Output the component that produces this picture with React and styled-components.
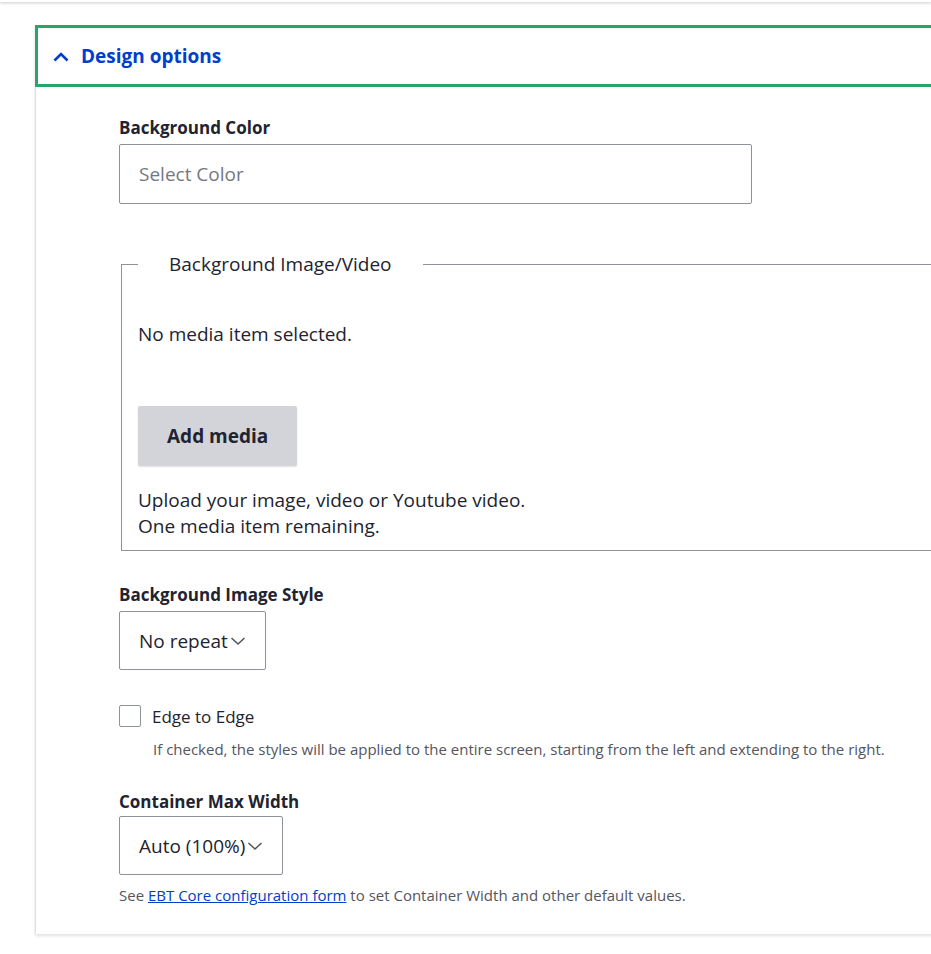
import React from 'react';
import styled, { createGlobalStyle } from 'styled-components';

const GlobalStyle = createGlobalStyle`
	html, body {
		margin: 0;
		padding: 0;
		background: #fff;
		overflow: hidden;
	}

	body {
		font-family: "Open Sans", "Noto Sans", sans-serif;
		color: #222330;
	}
`;

const Page = styled.div`
	width: 931px;
	height: 954px;
	overflow: hidden;
`;

const TopEdge = styled.div`
	height: 2px;
	background: #fff;
	box-shadow: 0 1px 3px rgba(0, 0, 0, 0.25);
`;

const Details = styled.section`
	margin: 23px 0 0 35px;
	width: 960px;
	border-left: 1px solid #dedfe4;
	background: #fff;
	box-shadow: 0 2px 3px rgba(0, 0, 0, 0.12);
`;

const Summary = styled.div`
	display: flex;
	align-items: center;
	gap: 12px;
	height: 56px;
	padding-left: 15px;
	margin-left: -1px;
	border: 3px solid #26a769;
	color: #003ecc;
	font-size: 19px;
	font-weight: 700;
	cursor: pointer;
`;

const Body = styled.div`
	padding: 31px 0 29px 83px;
`;

const Field = styled.div`
	margin-bottom: ${p => p.$gap || 0}px;
`;

const Label = styled.div`
	font-size: 17px;
	font-weight: 700;
	line-height: 20px;
	margin-bottom: ${p => p.$tight ? 4 : 6}px;
`;

const TextInput = styled.div`
	box-sizing: border-box;
	width: 633px;
	height: 60px;
	border: 1px solid #8e929c;
	border-radius: 2px;
	padding: 0 19px;
	display: flex;
	align-items: center;
	font-size: 19px;
	color: #757783;
`;

const Fieldset = styled.fieldset`
	margin: 0 0 0 2px;
	padding: 45px 0 11px 16px;
	border: 1px solid #8e929c;
	border-right: none;
	min-width: 0;
`;

const Legend = styled.legend`
	padding: 0 31px;
	font-size: 19px;
	line-height: 24px;
`;

const Text = styled.p`
	margin: 0;
	font-size: 19px;
	line-height: 26px;
`;

const Button = styled.button`
	box-sizing: border-box;
	display: block;
	margin: 59px 0 21px;
	height: 60px;
	padding: 0 29px;
	border: none;
	border-radius: 2px;
	background: #d3d4d9;
	color: #222330;
	font-family: inherit;
	font-size: 19px;
	font-weight: 700;
	box-shadow: 0 1px 2px rgba(0, 0, 0, 0.12);
`;

const Select = styled.div`
	box-sizing: border-box;
	display: inline-flex;
	align-items: center;
	gap: 2px;
	height: 59px;
	padding: 0 19px;
	border: 1px solid #8e929c;
	border-radius: 2px;
	font-size: 19px;
	color: #222330;
`;

const CheckRow = styled.label`
	display: flex;
	align-items: center;
	gap: 11px;
	height: 22px;
	font-size: 17px;
`;

const Box = styled.span`
	box-sizing: border-box;
	width: 22px;
	height: 22px;
	border: 1px solid #8e929c;
	border-radius: 2px;
`;

const Description = styled.div`
	margin: ${p => p.$indent ? '12px 0 0 34px' : '10px 0 0'};
	font-size: 15px;
	line-height: 20px;
	color: #545560;
`;

const Link = styled.a`
	color: #003ecc;
	text-decoration: underline;
`;

const ChevronUp = () => (
	<svg width="16" height="11" viewBox="0 0 16 11" fill="none">
		<path d="M1.5 9.5 L8 3 L14.5 9.5" stroke="#003ecc" strokeWidth="2.6" />
	</svg>
);

const ChevronDown = () => (
	<svg width="16" height="10" viewBox="0 0 16 10" fill="none">
		<path d="M1.5 2 L8 8 L14.5 2" stroke="#545560" strokeWidth="1.6" />
	</svg>
);

export default function App() {
	return (
		<Page>
			<GlobalStyle />
			<TopEdge />
			<Details>
				<Summary>
					<ChevronUp />
					Design options
				</Summary>
				<Body>
					<Field $gap={48}>
						<Label>Background Color</Label>
						<TextInput>Select Color</TextInput>
					</Field>

					<Field $gap={34}>
						<Fieldset>
							<Legend>Background Image/Video</Legend>
							<Text>No media item selected.</Text>
							<Button>Add media</Button>
							<Text>
								Upload your image, video or Youtube video.
								<br />
								One media item remaining.
							</Text>
						</Fieldset>
					</Field>

					<Field $gap={35}>
						<Label>Background Image Style</Label>
						<Select>
							No repeat
							<ChevronDown />
						</Select>
					</Field>

					<Field $gap={33}>
						<CheckRow>
							<Box />
							Edge to Edge
						</CheckRow>
						<Description $indent>
							If checked, the styles will be applied to the entire screen, starting from the left and extending to the right.
						</Description>
					</Field>

					<Field>
						<Label $tight>Container Max Width</Label>
						<Select>
							Auto (100%)
							<ChevronDown />
						</Select>
						<Description>
							See <Link href="#">EBT Core configuration form</Link> to set Container Width and other default values.
						</Description>
					</Field>
				</Body>
			</Details>
		</Page>
	);
}
